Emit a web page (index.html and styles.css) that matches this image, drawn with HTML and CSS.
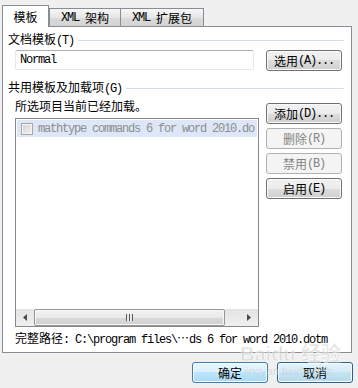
FILE: index.html
```html
<!DOCTYPE html>
<html lang="zh-CN">
<head>
  <meta charset="UTF-8">
  <title>模板和加载项</title>
  <link rel="stylesheet" href="styles.css">
</head>
<body>
  <div class="dialog">
    <div class="tabs">
      <div class="tab active">模板</div>
      <div class="tab"><span class="mono">XML&nbsp;</span>架构</div>
      <div class="tab"><span class="mono">XML&nbsp;</span>扩展包</div>
    </div>

    <div class="panel">
      <div class="group-title">
        <span>文档模板<span class="mono">(T)</span></span>
        <div class="rule"></div>
      </div>
      <div class="template-row">
        <div class="textbox mono">Normal</div>
        <button class="btn">选用<span class="mono">(A)...</span></button>
      </div>

      <div class="group-title second">
        <span>共用模板及加载项<span class="mono">(G)</span></span>
        <div class="rule"></div>
      </div>
      <div class="addins-row">
        <div class="addins-left">
          <div class="caption">所选项目当前已经加载。</div>
          <div class="listbox">
            <div class="items">
              <div class="item">
                <span class="check"></span>
                <span class="item-text mono">mathtype commands 6 for word 2010.do</span>
              </div>
            </div>
            <div class="hscroll">
              <div class="arrow">
                <svg width="4" height="7" viewBox="0 0 4 7"><path d="M4 0 L0 3.5 L4 7 Z" fill="#4a4a4a"/></svg>
              </div>
              <div class="thumb"><span class="grip"></span></div>
              <div class="track"></div>
              <div class="arrow">
                <svg width="4" height="7" viewBox="0 0 4 7"><path d="M0 0 L4 3.5 L0 7 Z" fill="#4a4a4a"/></svg>
              </div>
            </div>
          </div>
        </div>
        <div class="addins-buttons">
          <button class="btn">添加<span class="mono">(D)...</span></button>
          <button class="btn" disabled>删除<span class="mono">(R)</span></button>
          <button class="btn" disabled>禁用<span class="mono">(B)</span></button>
          <button class="btn">启用<span class="mono">(E)</span></button>
        </div>
      </div>
      <div class="path">完整路径<span class="mono">: C:\program files\</span><span class="dots">⋯</span><span class="mono">ds 6 for word 2010.dotm</span></div>
    </div>

    <div class="footer">
      <button class="btn blue">确定</button>
      <button class="btn blue focus">取消</button>
    </div>
  </div>

  <div class="watermark">
    <div class="wm-logo">Bai<span class="paw">du</span> 经验</div>
    <div class="wm-url">jingyan.baidu.com</div>
  </div>
</body>
</html>
```

FILE: styles.css
```css
* {
  margin: 0;
  padding: 0;
  box-sizing: border-box;
}

body {
  width: 358px;
  height: 388px;
  overflow: hidden;
  position: relative;
  background-color: #f0f0f0;
  font-family: "Noto Sans CJK SC", "Liberation Sans", sans-serif;
  font-size: 12px;
  line-height: 14px;
  color: #000;
}

.mono {
  font-family: "Liberation Mono", "DejaVu Sans Mono", monospace;
  font-size: 12px;
  letter-spacing: -1.2px;
}

.dialog {
  padding: 5px 6px 0 2px;
}

/* tab strip */
.tabs {
  height: 21px;
  display: flex;
  align-items: flex-end;
}

.tab {
  height: 18px;
  display: flex;
  align-items: center;
  justify-content: center;
  border: 1px solid #898c95;
  border-bottom: none;
  background: linear-gradient(#f7f7f7, #e6e6e6 50%, #dadada 50%, #d4d4d4);
  margin-left: -1px;
  width: 72px;
}

.tab:last-child {
  width: 84px;
}

.tab.active {
  width: 47px;
  height: 22px;
  margin: 0 0 -1px 0;
  background: #fff;
  position: relative;
  z-index: 1;
  padding-top: 1px;
}

.tab.active + .tab {
  margin-left: 0;
}

.panel {
  width: 350px;
  height: 327px;
  border: 1px solid #898c95;
  background: #fff;
}

/* group headings */
.group-title {
  height: 14px;
  display: flex;
  align-items: center;
  margin: 6px 7px 0 5px;
}

.group-title.second {
  margin-top: 10px;
}

.rule {
  flex: 1;
  height: 1px;
  margin-left: 4px;
  background: #d5dfe5;
}

.template-row {
  display: flex;
  gap: 12px;
  margin: 3px 0 0 12px;
}

.textbox {
  width: 239px;
  height: 20px;
  border: 1px solid #e3e9ef;
  border-top-color: #abadb3;
  border-radius: 2px;
  padding: 3px 0 0 4px;
  line-height: 13px;
}

/* win7 push buttons */
.btn {
  width: 76px;
  height: 21px;
  border: 1px solid #707070;
  border-radius: 3px;
  background: linear-gradient(#f2f2f2, #ebebeb 50%, #dddddd 50%, #cfcfcf);
  box-shadow: inset 0 0 0 1px #fbfbfb;
  font-family: inherit;
  font-size: 12px;
  line-height: 14px;
  color: #000;
  display: flex;
  align-items: center;
  justify-content: center;
}

.btn:disabled {
  border-color: #adb2b5;
  background: #f4f4f4;
  box-shadow: none;
  color: #838383;
}

.btn.blue {
  border-color: #3c7fb1;
  background: linear-gradient(#eaf6fd, #d9f0fc 50%, #bee6fd 50%, #a7d9f5);
}

.btn.focus {
  border-color: #2c628b;
  background: linear-gradient(#e5f4fc, #d3ebf8 50%, #c4e5f6 50%, #b6d9ec);
}

.addins-row {
  display: flex;
  margin: 3px 0 0 12px;
}

.caption {
  height: 16px;
  line-height: 16px;
}

.listbox {
  width: 244px;
  height: 209px;
  margin-top: 4px;
  border: 1px solid #828790;
  display: flex;
  flex-direction: column;
}

.items {
  flex: 1;
  padding: 1px;
}

.item {
  height: 17px;
  display: flex;
  align-items: center;
  padding-left: 4px;
  background: #dde7f7;
  overflow: hidden;
}

.check {
  width: 12px;
  height: 12px;
  flex: none;
  border: 1px solid #a6a6a6;
  background: linear-gradient(135deg, #d2d2d2, #f3f3f3);
  box-shadow: inset 0 0 0 1px #f4f4f4;
}

.item-text {
  margin-left: 5px;
  color: #8e8e8e;
  white-space: nowrap;
}

.hscroll {
  height: 17px;
  display: flex;
  background: linear-gradient(#e3e3e3, #f0f0f0);
}

.arrow {
  width: 18px;
  display: flex;
  align-items: center;
  justify-content: center;
}

.thumb {
  width: 191px;
  border: 1px solid #979797;
  border-radius: 2px;
  background: linear-gradient(#f3f3f3, #e9e9e9 50%, #d8d8d8 50%, #d2d2d2);
  box-shadow: inset 0 0 0 1px #f7f7f7;
  display: flex;
  align-items: center;
  justify-content: center;
}

.grip {
  width: 7px;
  height: 7px;
  background: repeating-linear-gradient(90deg, #595959 0 1px, #e9e9e9 1px 3px);
}

.track {
  flex: 1;
}

.addins-buttons {
  display: flex;
  flex-direction: column;
  gap: 4px;
  margin-left: 7px;
  padding-top: 5px;
}

.path {
  margin: 4px 0 0 12px;
  white-space: nowrap;
}

.dots {
  display: inline-block;
  width: 12px;
  text-align: center;
}

.footer {
  display: flex;
  justify-content: flex-end;
  gap: 9px;
  padding: 9px 5px 0 0;
  margin-right: -6px;
}

/* baidu watermark over the footer */
.watermark {
  position: absolute;
  left: 240px;
  top: 343px;
  color: rgba(205, 205, 205, 0.6);
  pointer-events: none;
}

.wm-logo {
  font-family: "Liberation Sans", "Noto Sans CJK SC", sans-serif;
  font-size: 20px;
  font-weight: bold;
  line-height: 22px;
  -webkit-text-stroke: 1px rgba(255, 255, 255, 0.6);
}

.wm-url {
  font-family: "Liberation Sans", sans-serif;
  font-size: 11px;
  line-height: 12px;
  padding-left: 4px;
}
```
